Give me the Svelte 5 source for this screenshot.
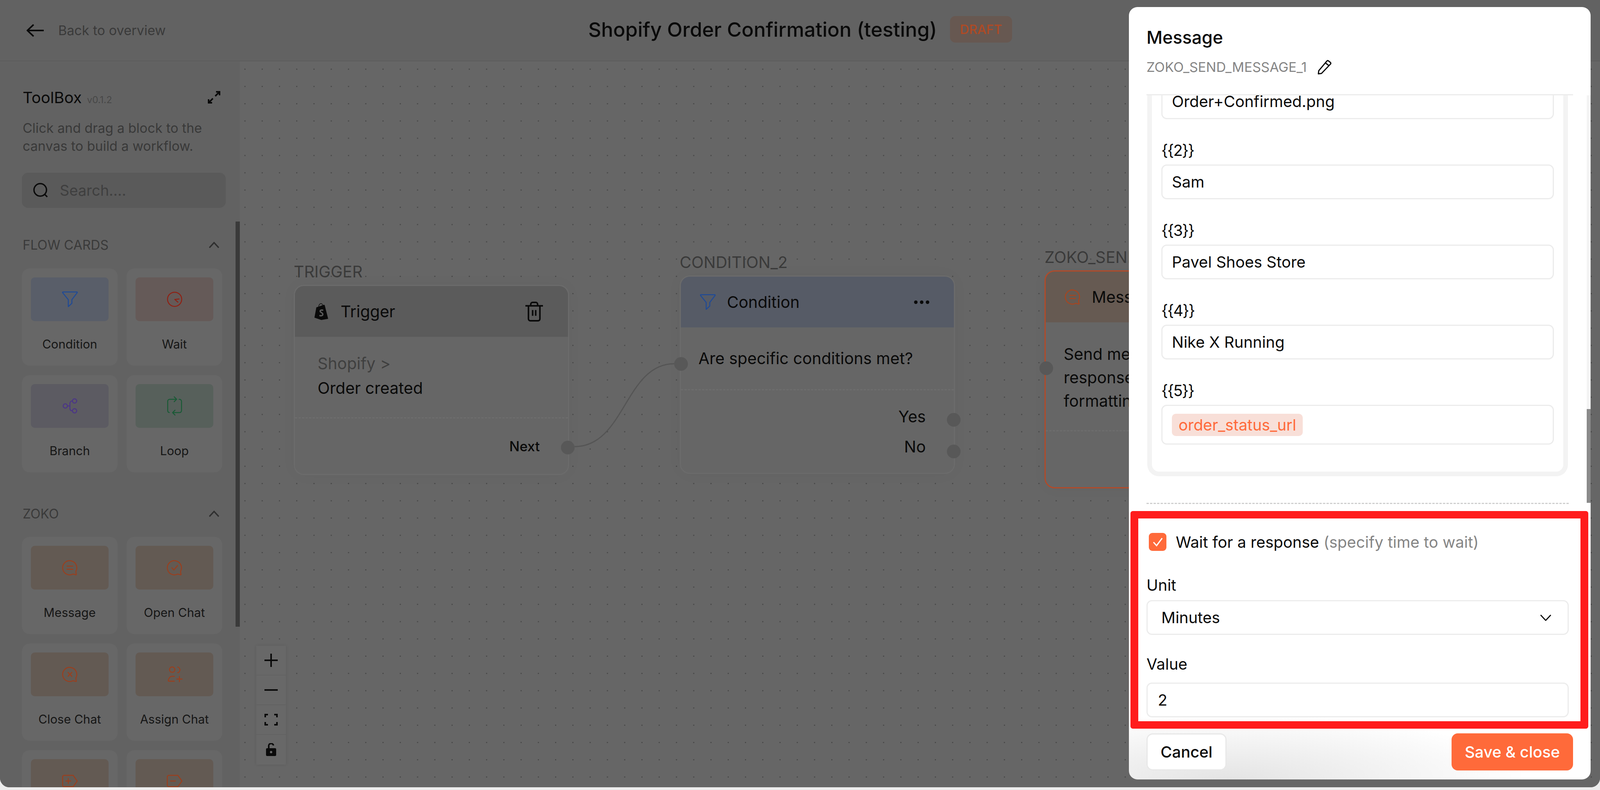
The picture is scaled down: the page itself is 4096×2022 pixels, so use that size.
<script>
  const bubble = 'M19.3 16.4A8.7 8.7 0 1 0 15.6 19.9c1.4-.2 3.2 1 4.2.8.4-.2-.6-2.5-.5-4.3z'
  const icons = {
    funnel: 'M3.6 3h16.8a.6.6 0 0 1 .5 1l-6.5 8.5V17L10 21v-8.5L3.1 4a.6.6 0 0 1 .5-1z',
    wait: 'M20.7 12a8.7 8.7 0 1 1-17.4 0 8.7 8.7 0 0 1 17.4 0zM17.4 11.6l-5.2.6 3.8 3.3',
    branch: 'M8.9 12H12M15.1 5.9c-1.9 0-3.1 1.2-3.1 3.1v6c0 1.9 1.2 3 3.1 3M8.9 12a2.6 2.6 0 1 1-5.2 0 2.6 2.6 0 0 1 5.2 0zM20.3 5.9a2.6 2.6 0 1 1-5.2 0 2.6 2.6 0 0 1 5.2 0zM20.3 18a2.6 2.6 0 1 1-5.2 0 2.6 2.6 0 0 1 5.2 0z',
    loop: 'M11.5.8l3 3-3 3M14.5 3.8H6A2.5 2.5 0 0 0 3.5 6.3v11.4a2.5 2.5 0 0 0 2 2.4M17.5 3.9a2.5 2.5 0 0 1 3 2.4v11.4a2.5 2.5 0 0 1-2.5 2.5H9.5M12.5 23.2l-3-3 3-3',
    message: bubble + 'M8.4 10.1h7.2M8.4 13.9h7.2',
    open: bubble + 'M8.6 12.1l2.4 2.7 4.6-5.4',
    close: bubble + 'M9.6 9.6l4.8 4.8M14.4 9.6l-4.8 4.8',
    assign: 'M12.3 6.2a3.3 3.3 0 1 1-6.6 0 3.3 3.3 0 0 1 6.6 0zM15.8 3a3.6 3.6 0 0 1 0 7M11.7 14.4H8.8c-2.4 0-4 2.4-4.6 5.1-.1.5.2.9.8.9h6.7M17.9 14.6V21M14.7 17.8h6.4',
    tagAdd: 'M3 7a2 2 0 0 1 2-2h11l5 7-5 7H5a2 2 0 0 1-2-2zM7 12h6M10 9v6',
    tagRemove: 'M3 7a2 2 0 0 1 2-2h11l5 7-5 7H5a2 2 0 0 1-2-2zM7 12h6'
  }

  const flowCards = [
    { label: 'Condition', icon: 'funnel', tone: 'blue' },
    { label: 'Wait', icon: 'wait', tone: 'red' },
    { label: 'Branch', icon: 'branch', tone: 'purple' },
    { label: 'Loop', icon: 'loop', tone: 'green' }
  ]
  const zokoCards = [
    { label: 'Message', icon: 'message', tone: 'orange' },
    { label: 'Open Chat', icon: 'open', tone: 'orange' },
    { label: 'Close Chat', icon: 'close', tone: 'orange' },
    { label: 'Assign Chat', icon: 'assign', tone: 'orange' },
    { label: '', icon: 'tagAdd', tone: 'orange' },
    { label: '', icon: 'tagRemove', tone: 'orange' }
  ]
  const fields = [
    { label: '{{2}}', value: 'Sam' },
    { label: '{{3}}', value: 'Pavel Shoes Store' },
    { label: '{{4}}', value: 'Nike X Running' }
  ]
</script>

{#snippet blockGrid(cards)}
  <div class="grid">
    {#each cards as card}
      <div class="block">
        <div class="tile {card.tone}">
          <svg viewBox="0 0 24 24" width="50" height="50"><path d={icons[card.icon]} /></svg>
        </div>
        <div class="block-label">{card.label}</div>
      </div>
    {/each}
  </div>
{/snippet}

<div class="page">
  <div class="window">
    <header class="topbar">
      <div class="back">
        <svg viewBox="0 0 44 32" width="44" height="32"><path d="M44 16H2M18 1L2 16l16 15" /></svg>
        <span>Back to overview</span>
      </div>
      <div class="title-wrap">
        <h1>Shopify Order Confirmation (testing)</h1>
        <span class="draft">DRAFT</span>
      </div>
    </header>

    <div class="workspace">
      <aside class="sidebar">
        <div class="thumb"></div>
        <div class="tool-head">
          <div><span class="tool-title">ToolBox</span> <span class="version">v0.1.2</span></div>
          <svg viewBox="0 0 32 32" width="32" height="32"><path d="M19 13L30 2M21 2h9v9M13 19L2 30M11 30H2v-9" /></svg>
        </div>
        <p class="hint">Click and drag a block to the<br />canvas to build a workflow.</p>
        <div class="search">
          <svg viewBox="0 0 38 38" width="38" height="38"><circle cx="18" cy="18" r="16" /><path d="M30 30l6 6" /></svg>
          <span>Search....</span>
        </div>
        <div class="section first">
          <span>FLOW CARDS</span>
          <svg viewBox="0 0 26 16" width="26" height="16"><path d="M1 15L13 2l12 13" /></svg>
        </div>
        {@render blockGrid(flowCards)}
        <div class="section second">
          <span>ZOKO</span>
          <svg viewBox="0 0 26 16" width="26" height="16"><path d="M1 15L13 2l12 13" /></svg>
        </div>
        {@render blockGrid(zokoCards)}
      </aside>

      <main class="canvas">
        <svg class="wire" width="1200" height="1200" viewBox="0 0 1200 1200">
          <path d="M857 986C986 986 986 774 1112 774" />
        </svg>

        <div class="node-wrap trigger-pos">
          <div class="node-label">TRIGGER</div>
          <div class="node">
            <div class="node-head grey">
              <svg class="shopify" viewBox="0 0 40 44" width="39" height="43">
                <path class="bag" d="M2 38L7 11l20-7 2 1 9 36-18 3z" />
                <path class="bag-handle" d="M13 10c0-5 3-9 6-9s5 3 5 7" />
                <path class="bag-s" d="M25 19c-3-2-8-1-8 2 0 4 7 3 7 8 0 4-5 5-9 3" />
              </svg>
              <span class="node-name">Trigger</span>
              <svg class="head-action" viewBox="0 0 48 52" width="47" height="51"><path d="M1 11h46M9 11v34a5 5 0 0 0 5 5h20a5 5 0 0 0 5-5V11M15 11V7a5 5 0 0 1 5-5h8a5 5 0 0 1 5 5v4M20 22v15M28 22v15" /></svg>
            </div>
            <div class="trigger-body">
              <div class="muted">Shopify &gt;</div>
              <div>Order created</div>
            </div>
            <div class="node-foot next-foot"><span class="port-name strong">Next</span></div>
            <span class="handle next-handle"></span>
          </div>
        </div>

        <div class="node-wrap condition-pos">
          <div class="node-label">CONDITION_2</div>
          <div class="node">
            <div class="node-head blue-head">
              <svg class="head-icon" viewBox="0 0 24 24" width="50" height="50"><path d={icons.funnel} /></svg>
              <span class="node-name">Condition</span>
              <span class="dots"><i></i><i></i><i></i></span>
            </div>
            <div class="condition-body">Are specific conditions met?</div>
            <div class="node-foot ports">
              <span class="port-name">Yes</span>
              <span class="port-name">No</span>
            </div>
            <span class="handle in-handle"></span>
            <span class="handle yes-handle"></span>
            <span class="handle no-handle"></span>
          </div>
        </div>

        <div class="node-wrap message-pos">
          <div class="node-label">ZOKO_SEND_MESSAGE_1</div>
          <div class="node selected">
            <div class="node-head orange-head">
              <svg class="head-icon orange-stroke" viewBox="0 0 24 24" width="50" height="50"><path d={icons.message} /></svg>
              <span class="node-name">Message</span>
            </div>
            <div class="message-body">Send message with<br />response buttons and<br />formatting options</div>
            <span class="handle msg-handle"></span>
          </div>
        </div>

        <div class="zoom-controls">
          <button aria-label="Zoom in"><svg viewBox="0 0 34 34" width="34" height="34"><path d="M0 17h34M17 0v34" /></svg></button>
          <button aria-label="Zoom out"><svg viewBox="0 0 34 34" width="34" height="34"><path d="M0 17h34" /></svg></button>
          <button aria-label="Fit view"><svg viewBox="0 0 34 30" width="34" height="30"><path d="M2 9V2h7M25 2h7v7M32 21v7h-7M9 28H2v-7" /></svg></button>
          <button aria-label="Lock"><svg class="lock" viewBox="0 0 28 34" width="28" height="34"><path class="shackle" d="M8 13V8a6 6 0 0 1 12-2" /><rect x="1" y="13" width="26" height="20" rx="3" /><circle cx="14" cy="23" r="3" /></svg></button>
        </div>
      </main>
    </div>
  </div>

  <section class="panel">
    <div class="panel-head">
      <h2>Message</h2>
      <div class="panel-id">
        <span>ZOKO_SEND_MESSAGE_1</span>
        <svg viewBox="0 0 40 38" width="40" height="38"><path d="M12 35l-8 1 1-8L26 3a3 3 0 0 1 4 0l5 4a3 3 0 0 1 0 4zM22 8l9 7" /></svg>
      </div>
    </div>

    <div class="scroller">
      <div class="scroll-track"><div class="scroll-thumb"></div></div>
      <div class="params">
        <div class="input first-input">Order+Confirmed.png</div>
        {#each fields as field}
          <div class="param-label">{field.label}</div>
          <div class="input">{field.value}</div>
        {/each}
        <div class="param-label">{'{{5}}'}</div>
        <div class="input tag-input"><span class="tag">order_status_url</span></div>
      </div>
    </div>

    <div class="wait-form">
      <label class="wait-row">
        <span class="checkbox"><svg viewBox="0 0 24 24" width="38" height="38"><path d="M5 12.5l5 5.5 9-12" /></svg></span>
        <span>Wait for a response <em>(specify time to wait)</em></span>
      </label>
      <div class="form-label unit-label">Unit</div>
      <div class="control select">
        <span>Minutes</span>
        <svg viewBox="0 0 28 16" width="28" height="16"><path d="M1 1l13 14L27 1" /></svg>
      </div>
      <div class="form-label value-label">Value</div>
      <div class="control value">2</div>
    </div>

    <div class="panel-foot">
      <button class="cancel">Cancel</button>
      <button class="save">Save &amp; close</button>
    </div>
  </section>

  <div class="highlight"></div>
</div>

<style>
  :global(body) {
    margin: 0;
    background: #ededed;
  }
  .page {
    position: relative;
    width: 4096px;
    height: 2022px;
    overflow: hidden;
    background: #ededed;
    font-family: Inter, 'Liberation Sans', sans-serif;
    font-size: 40px;
    color: #0a0a0a;
  }
  svg path {
    fill: none;
  }
  .window {
    display: flex;
    flex-direction: column;
    height: 2015px;
    border-radius: 0 0 24px 24px;
    overflow: hidden;
    background: #626262;
  }

  .topbar {
    position: relative;
    flex: none;
    display: flex;
    align-items: center;
    height: 155px;
    padding-left: 68px;
    border-bottom: 2px solid #5c5c5c;
  }
  .back {
    display: flex;
    align-items: center;
    gap: 37px;
    font-size: 34px;
    color: #3a3a3a;
  }
  .back svg path {
    stroke: #0a0a0a;
    stroke-width: 4;
  }
  .title-wrap {
    position: absolute;
    left: 1506px;
    top: 41px;
    display: flex;
    align-items: center;
    gap: 33px;
  }
  h1 {
    margin: 0;
    font-size: 51.2px;
    font-weight: 500;
  }
  .draft {
    display: flex;
    align-items: center;
    height: 68px;
    padding: 0 26px;
    border-radius: 14px;
    background: #675851;
    color: #b04a25;
    font-size: 32.5px;
    font-weight: 500;
  }

  .workspace {
    flex: 1;
    display: flex;
    min-height: 0;
  }
  .sidebar {
    position: relative;
    flex: none;
    box-sizing: border-box;
    width: 614px;
    padding: 62px 0 0 56px;
    overflow: hidden;
    background: #626262;
  }
  .thumb {
    position: absolute;
    left: 603px;
    top: 410px;
    width: 11px;
    height: 1037px;
    background: #3a3a3a;
  }
  .tool-head {
    display: flex;
    align-items: center;
    justify-content: space-between;
    width: 506px;
    height: 60px;
    padding-left: 2px;
  }
  .tool-head svg path {
    stroke: #0a0a0a;
    stroke-width: 4;
  }
  .tool-title {
    font-size: 40px;
  }
  .version {
    margin-left: 2px;
    font-size: 24px;
    color: #474747;
  }
  .hint {
    margin: 26px 0 0 2px;
    font-size: 34px;
    line-height: 46px;
    color: #393939;
    white-space: nowrap;
  }
  .search {
    display: flex;
    align-items: center;
    gap: 30px;
    box-sizing: border-box;
    width: 522px;
    height: 90px;
    margin-top: 45px;
    padding-left: 29px;
    border-radius: 16px;
    background: #5a5a5a;
    color: #3f3f3f;
    font-size: 38px;
  }
  .search svg circle,
  .search svg path {
    fill: none;
    stroke: #0a0a0a;
    stroke-width: 3.5;
  }
  .section {
    display: flex;
    align-items: center;
    justify-content: space-between;
    width: 503px;
    height: 44px;
    padding-left: 2px;
    font-size: 33.5px;
    color: #3a3a3a;
  }
  .section svg path {
    stroke: #2f2f2f;
    stroke-width: 3.5;
  }
  .section.first {
    margin-top: 73px;
    margin-bottom: 38px;
  }
  .section.second {
    margin-top: 84px;
    margin-bottom: 37px;
  }
  .grid {
    display: grid;
    grid-template-columns: 245px 245px;
    grid-auto-rows: 249px;
    gap: 24px 23px;
  }
  .block {
    box-sizing: border-box;
    padding: 23px 23px 0;
    border-radius: 20px;
    background: #676767;
  }
  .tile {
    display: flex;
    align-items: center;
    justify-content: center;
    height: 112px;
    border-radius: 10px;
  }
  .tile svg path {
    stroke-width: 1.2;
    stroke-linecap: round;
    stroke-linejoin: round;
  }
  .blue {
    background: #595e69;
  }
  .tile.blue svg path {
    stroke: #1f4a96;
  }
  .red {
    background: #655a58;
  }
  .tile.red svg path {
    stroke: #8f2114;
  }
  .purple {
    background: #5c5b62;
  }
  .tile.purple svg path {
    stroke: #4b3488;
  }
  .green {
    background: #57605b;
  }
  .tile.green svg path {
    stroke: #1a5a36;
  }
  .orange {
    background: #635a53;
  }
  .tile.orange svg path {
    stroke: #9a3f1e;
  }
  .block-label {
    margin-top: 39px;
    font-size: 31px;
    line-height: 40px;
    text-align: center;
    color: #161616;
    white-space: nowrap;
  }

  .canvas {
    position: relative;
    flex: 1;
    background-color: #666;
    background-image: radial-gradient(circle, #474747 1.3px, transparent 1.8px);
    background-size: 44.2px 44.2px;
    background-position: -9px -2px;
    font-size: 41px;
  }
  .wire {
    position: absolute;
    left: 0;
    top: 0;
    overflow: visible;
    z-index: 1;
  }
  .wire path {
    stroke: #555;
    stroke-width: 3;
  }
  .node-wrap {
    position: absolute;
    width: 705px;
  }
  .trigger-pos {
    left: 138px;
    top: 516px;
  }
  .condition-pos {
    left: 1126px;
    top: 492px;
  }
  .message-pos {
    left: 2060px;
    top: 479px;
  }
  .node-label {
    height: 44px;
    margin-bottom: 12px;
    font-size: 41px;
    line-height: 44px;
    white-space: nowrap;
    color: #3a3a3a;
  }
  .node {
    position: relative;
    box-sizing: border-box;
    display: flex;
    flex-direction: column;
    border: 3px solid #6b6b6b;
    border-radius: 26px;
    background: #666;
    box-shadow: 0 0 40px rgba(0, 0, 0, 0.03);
  }
  .trigger-pos .node {
    height: 487px;
  }
  .condition-pos .node {
    height: 508px;
  }
  .node.selected {
    height: 558px;
    border-color: #b34a28;
  }
  .node-head {
    display: flex;
    align-items: center;
    flex: none;
    height: 130px;
    padding: 0 63px 0 48px;
    border-radius: 23px 23px 0 0;
  }
  .grey {
    background: #5b5b5b;
  }
  .blue-head {
    background: #565b66;
  }
  .orange-head {
    background: #665a52;
  }
  .node-name {
    margin-left: 30px;
  }
  .head-action {
    margin-left: auto;
  }
  .head-action path {
    stroke: #0a0a0a;
    stroke-width: 4;
  }
  .bag {
    fill: #0a0a0a;
  }
  .bag-handle {
    stroke: #0a0a0a;
    stroke-width: 1.5;
  }
  .bag-s {
    stroke: #5b5b5b;
    stroke-width: 3.5;
  }
  .head-icon {
    margin: 0 -6px 0 -4px;
  }
  .head-icon path {
    stroke: #1f4a96;
    stroke-width: 1.2;
    stroke-linejoin: round;
    stroke-linecap: round;
  }
  .head-icon.orange-stroke path {
    stroke: #a8451f;
  }
  .dots {
    display: flex;
    gap: 6px;
    margin-left: auto;
  }
  .dots i {
    width: 9px;
    height: 9px;
    border-radius: 50%;
    background: #0a0a0a;
  }
  .trigger-body {
    box-sizing: border-box;
    height: 209px;
    padding: 37px 0 0 58px;
    line-height: 63px;
    border-bottom: 3px dashed #6d6d6d;
  }
  .muted {
    color: #3f3f3f;
  }
  .node-foot {
    flex: 1;
    display: flex;
    flex-direction: column;
    align-items: flex-end;
    justify-content: center;
    padding-right: 72px;
  }
  .next-foot .strong {
    font-size: 35px;
    font-weight: 500;
  }
  .ports {
    line-height: 77px;
  }
  .condition-body {
    display: flex;
    align-items: center;
    box-sizing: border-box;
    height: 161px;
    padding-left: 45px;
    border-bottom: 3px dashed #6d6d6d;
    white-space: nowrap;
  }
  .message-body {
    box-sizing: border-box;
    height: 279px;
    padding: 51px 0 0 46px;
    line-height: 60px;
    border-bottom: 3px dashed #6d6d6d;
    white-space: nowrap;
  }
  .handle {
    position: absolute;
    width: 35px;
    height: 35px;
    border-radius: 50%;
    background: #585858;
    z-index: 2;
  }
  .next-handle {
    left: 681px;
    top: 396px;
  }
  .in-handle {
    left: -17px;
    top: 206px;
  }
  .yes-handle {
    left: 681px;
    top: 349px;
  }
  .no-handle {
    left: 681px;
    top: 430px;
  }
  .msg-handle {
    left: -16px;
    top: 230px;
  }
  .zoom-controls {
    position: absolute;
    left: 42px;
    top: 1496px;
    display: flex;
    flex-direction: column;
    width: 76px;
    background: #686868;
    box-shadow: 0 0 8px rgba(0, 0, 0, 0.1);
  }
  .zoom-controls button {
    display: flex;
    align-items: center;
    justify-content: center;
    height: 76px;
    padding: 0;
    border: 0;
    border-bottom: 2px solid #626262;
    background: none;
  }
  .zoom-controls button:last-child {
    border-bottom: 0;
  }
  .zoom-controls path {
    stroke: #0a0a0a;
    stroke-width: 4;
  }
  .lock rect {
    fill: #0a0a0a;
  }
  .lock circle {
    fill: #686868;
  }

  .panel {
    position: absolute;
    left: 2890px;
    top: 18px;
    display: flex;
    flex-direction: column;
    box-sizing: border-box;
    width: 1182px;
    height: 1977px;
    padding-bottom: 23px;
    border-radius: 22px;
    background: radial-gradient(ellipse 760px 170px at 22% 100%, #e4e4e4, rgba(255, 255, 255, 0)), #fff;
  }
  .panel-head {
    flex: none;
    box-sizing: border-box;
    height: 226px;
    margin: 0 45px;
    padding-top: 50px;
    border-bottom: 3px solid #ececec;
  }
  h2 {
    margin: 0;
    font-size: 45px;
    font-weight: 500;
    line-height: 56px;
  }
  .panel-id {
    display: flex;
    align-items: center;
    gap: 26px;
    margin-top: 27px;
    font-size: 34.5px;
    color: #858585;
  }
  .panel-id path {
    stroke: #0a0a0a;
    stroke-width: 3;
    stroke-linejoin: round;
  }
  .scroller {
    position: relative;
    flex: 1;
    min-height: 0;
    overflow: hidden;
    padding-left: 47px;
  }
  .scroll-track {
    position: absolute;
    right: 0;
    top: 0;
    bottom: 0;
    width: 10px;
    background: #f4f4f4;
  }
  .scroll-thumb {
    height: 100%;
    margin-top: 803px;
    background: #8a8a8a;
  }
  .params {
    box-sizing: border-box;
    width: 1077px;
    height: 1003px;
    margin-top: -28px;
    padding: 0 24px;
    border: 12px solid #f3f3f3;
    border-top: 0;
    border-radius: 0 0 30px 30px;
  }
  .input {
    box-sizing: border-box;
    display: flex;
    align-items: center;
    height: 89px;
    padding-left: 24px;
    border: 3px solid #ececec;
    border-radius: 14px;
  }
  .first-input {
    border-top: 0;
    border-radius: 0 0 14px 14px;
  }
  .tag-input {
    height: 102px;
  }
  .param-label {
    height: 40px;
    margin: 60px 0 16px;
    line-height: 40px;
    letter-spacing: -1.8px;
  }
  .tag {
    display: flex;
    align-items: center;
    height: 57px;
    padding: 0 17px;
    border-radius: 10px;
    background: #f8dfd8;
    color: #ff6a3a;
  }
  .wait-form {
    flex: none;
    box-sizing: border-box;
    margin: 0 56px 0 45px;
    padding-top: 74px;
    border-top: 3px dashed #cfcfcf;
  }
  .wait-row {
    display: flex;
    align-items: center;
    gap: 24px;
    height: 46px;
    padding-left: 6px;
  }
  .wait-row em {
    font-style: normal;
    color: #858585;
  }
  .checkbox {
    display: flex;
    align-items: center;
    justify-content: center;
    width: 45px;
    height: 46px;
    border-radius: 9px;
    background: #ff6a3a;
  }
  .checkbox path {
    stroke: #fff;
    stroke-width: 2;
  }
  .form-label {
    height: 40px;
    line-height: 40px;
  }
  .unit-label {
    margin-top: 68px;
  }
  .value-label {
    margin-top: 55px;
  }
  .control {
    box-sizing: border-box;
    display: flex;
    align-items: center;
    justify-content: space-between;
    height: 89px;
    padding: 0 42px 0 35px;
    border: 3px solid #ececec;
    border-radius: 14px;
    background: #fff;
  }
  .select {
    margin-top: 18px;
  }
  .select path {
    stroke: #0a0a0a;
    stroke-width: 2.8;
  }
  .value {
    margin-top: 27px;
    padding-left: 26px;
  }
  .panel-foot {
    flex: none;
    display: flex;
    align-items: center;
    justify-content: space-between;
    height: 95px;
    margin: 41px 45px 0;
  }
  .panel-foot button {
    height: 95px;
    padding: 0;
    font: inherit;
    font-weight: 500;
    border-radius: 16px;
    white-space: nowrap;
  }
  .cancel {
    width: 205px;
    border: 3px solid #e8e8e8;
    background: #fff;
    color: #0a0a0a;
  }
  .save {
    width: 311px;
    border: 0;
    background: #ff6a3a;
    color: #fff;
  }
  .highlight {
    position: absolute;
    left: 2894px;
    top: 1308px;
    box-sizing: border-box;
    width: 1172px;
    height: 557px;
    border: solid #ff1c1c;
    border-width: 19px 20px;
    border-radius: 6px;
  }
</style>
